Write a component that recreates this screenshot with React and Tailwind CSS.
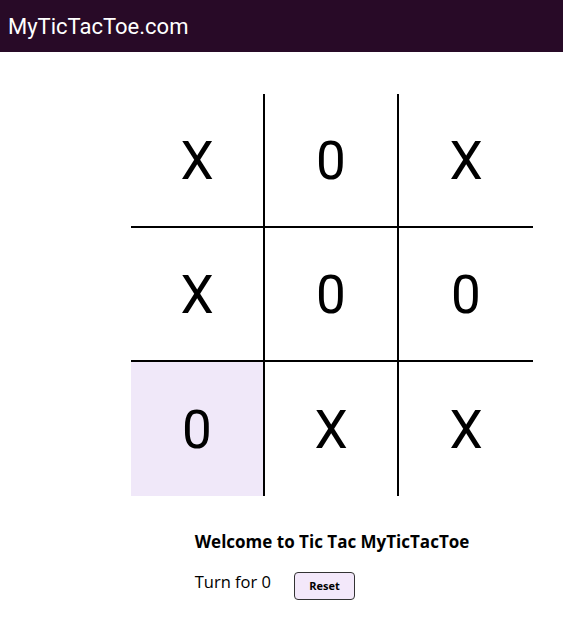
const board = ["X", "0", "X", "X", "0", "0", "0", "X", "X"];

function Cell({ value, index }) {
  const right = index % 3 !== 2;
  const bottom = index < 6;
  return (
    <div
      className={`h-[134px] pt-1 flex items-center justify-center text-[53px] text-black border-black ${right ? "border-r-2" : ""} ${bottom ? "border-b-2" : ""} ${index === 6 ? "bg-[#f0e8f9]" : "bg-white"}`}
      style={{ fontFamily: "Roboto, sans-serif" }}
    >
      {value}
    </div>
  );
}

export default function App() {
  return (
    <div className="min-h-screen bg-white">
      <header className="h-[52px] bg-[#280a27] flex items-center px-2">
        <span className="text-white text-[22px] font-[Roboto,sans-serif]">MyTicTacToe.com</span>
      </header>

      <div className="ml-[131px] mt-[42px] w-[402px]">
        <div className="grid grid-cols-3">
          {board.map((v, i) => (
            <Cell key={i} value={v} index={i} />
          ))}
        </div>

        <div className="flex justify-center mt-[34px] font-['Open_Sans',sans-serif]">
          <div>
            <h2 className="text-[17px] leading-[24px] font-bold text-black">Welcome to Tic Tac MyTicTacToe</h2>
            <div className="flex items-start mt-[16px]">
              <span className="text-[16.5px] leading-[24px] text-black">Turn for 0</span>
              <button className="ml-[23px] mt-[2px] w-[61px] h-[28px] rounded border border-[#333] bg-[#f3e8fa] text-[11px] font-bold text-black">
                Reset
              </button>
            </div>
          </div>
        </div>
      </div>
    </div>
  );
}
